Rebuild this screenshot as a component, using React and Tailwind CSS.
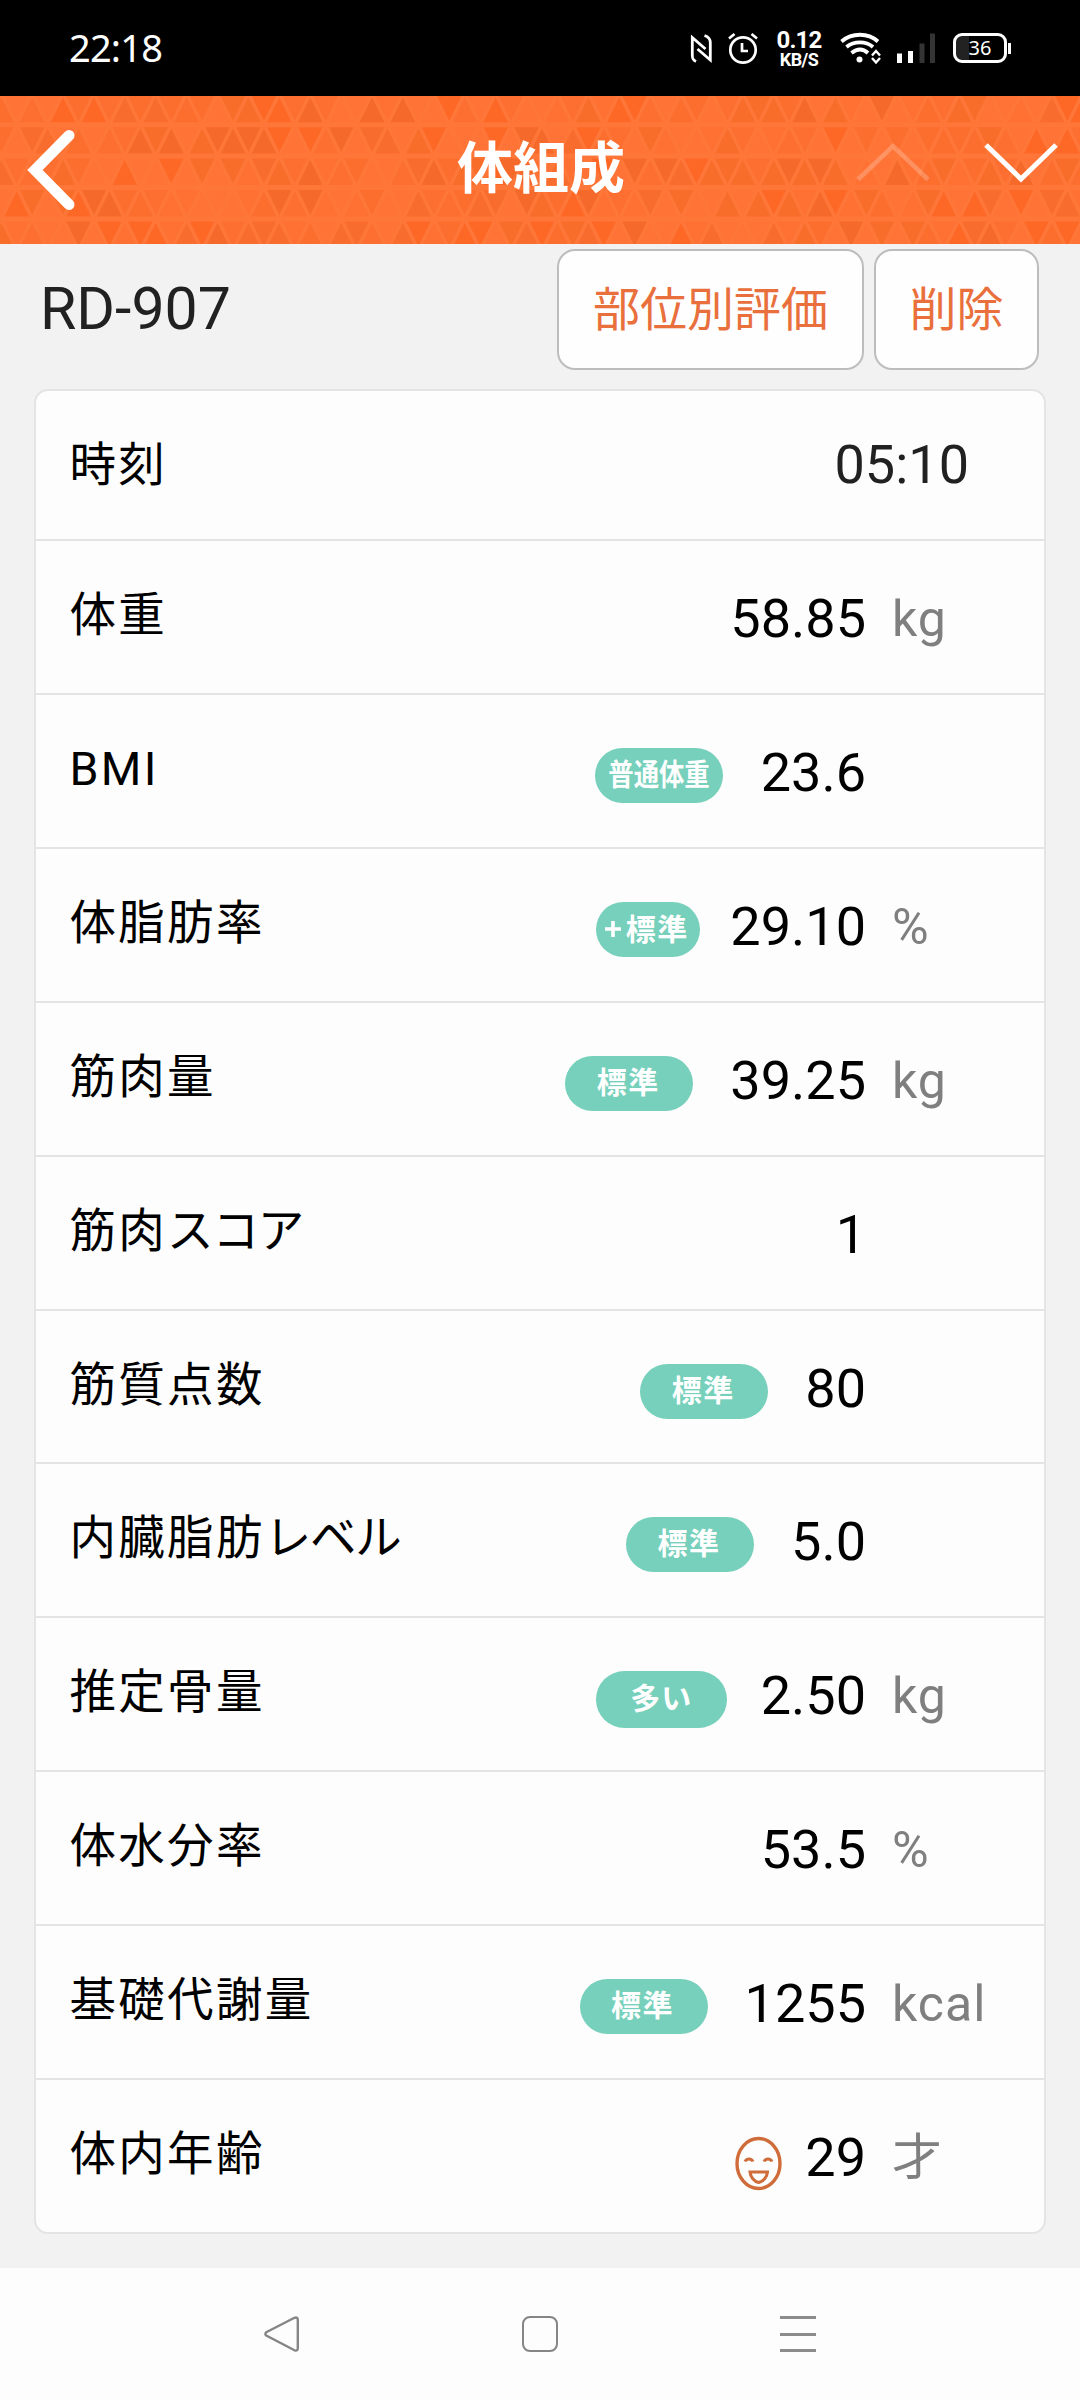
import React from "react";

const FONT = 'font-[Roboto,"Noto_Sans_CJK_JP",sans-serif]';

const ROWS = [
  { label: "時刻", value: "05:10", time: true },
  { label: "体重", value: "58.85", unit: "kg" },
  { label: "BMI", badge: "dense", text: "普通体重", value: "23.6" },
  { label: "体脂肪率", badge: "plus", text: "標準", value: "29.10", unit: "%" },
  { label: "筋肉量", badge: "std", text: "標準", value: "39.25", unit: "kg" },
  { label: "筋肉", kana: "スコア", value: "1" },
  { label: "筋質点数", badge: "std", text: "標準", value: "80" },
  { label: "内臓脂肪", kana: "レベル", badge: "std", text: "標準", value: "5.0" },
  { label: "推定骨量", badge: "wide", text: "多い", value: "2.50", unit: "kg" },
  { label: "体水分率", value: "53.5", unit: "%" },
  { label: "基礎代謝量", badge: "std", text: "標準", value: "1255", unit: "kcal" },
  { label: "体内年齢", badge: "face", value: "29", unit: "才" },
];

const TRI_W = 30.9;
const TRI_H = 31.4;
const SHADES = ["#ff7336", "#fb6e2e", "#f86c2d", "#f56a2b", "#ff7336", "#fe6826", "#f86d2a", "#fc6f31", "#fe7133"];

function shade(row, i) {
  const n = Math.sin(row * 127.1 + i * 311.7) * 43758.5453;
  return SHADES[Math.floor((n - Math.floor(n)) * SHADES.length)];
}

// Triangle lattice behind the title bar.
function Lattice() {
  const shapes = [];
  for (let r = 0; r < 5; r++) {
    const top = -2.7 + r * TRI_H;
    const bottom = top + TRI_H;
    const topPhase = r % 2 === 0 ? 1.3 : 16.75;
    const bottomPhase = r % 2 === 0 ? 16.75 : 1.3;
    for (let k = -1; k < 36; k++) {
      const tx = topPhase + k * TRI_W;
      const bx = bottomPhase + k * TRI_W;
      shapes.push(
        <path key={`d${r}-${k}`} d={`M${tx} ${top}h${TRI_W}l${-TRI_W / 2} ${TRI_H}z`} fill={shade(r, k * 2)} />,
        <path key={`u${r}-${k}`} d={`M${bx} ${bottom}h${TRI_W}l${-TRI_W / 2} ${-TRI_H}z`} fill={shade(r, k * 2 + 1)} />
      );
    }
  }
  return (
    <svg className="absolute inset-0 h-full w-full" viewBox="0 0 1080 148" preserveAspectRatio="none">
      <rect width="1080" height="148" fill="#ff7336" />
      <g stroke="#ff7639" strokeWidth="3.4">{shapes}</g>
      <path d="M0 28.7H1080M0 60.1H1080M0 91.5H1080M0 122.9H1080" stroke="#ff7639" strokeWidth="5" />
    </svg>
  );
}

function StatusBar() {
  return (
    <div className="flex h-[96px] items-start bg-black text-white">
      <span className='mt-[20px] ml-[69px] font-["Noto_Sans",sans-serif] text-[38px] leading-[54px] tracking-[-0.800px]'>22:18</span>
      <svg className="mt-[33px] ml-auto h-[31px] w-[24px]" viewBox="0 0 24 31" fill="none" stroke="#fff" strokeWidth="2.8">
        <path d="M7 28.5C3.800 27 3.300 25.500 3.300 22V4.500L16.500 16" />
        <path d="M15.500 2.500C20 4 21.300 6 21.300 9.500V27L8.500 16" />
      </svg>
      <svg className="mt-[32px] ml-[14px] h-[33px] w-[32px]" viewBox="0 0 32 33" fill="none" stroke="#fff" strokeWidth="2.7">
        <circle cx="16" cy="18" r="12.7" />
        <path d="M15 11V19H21" />
        <path d="M2 6.5L7.5 2M30 6.5L24.500 2" />
      </svg>
      <div className="mt-[29px] ml-[14px] flex w-[52px] flex-col items-center font-[Roboto,sans-serif]">
        <span className="text-[24px] leading-[22px] font-bold tracking-[-0.800px]">0.12</span>
        <span className="text-[18px] leading-[17px] font-bold tracking-[-0.600px]">KB/S</span>
      </div>
      <svg className="mt-[31px] ml-[15px] h-[34px] w-[42px]" viewBox="0 0 42 34" fill="none" stroke="#fff" strokeWidth="3.8">
        <path d="M1.5 10.5C12 1.5 28 1.5 38 10.5" />
        <path d="M6.5 16C14 9.8 26 9.8 33 16" />
        <path d="M11.5 22C17 17.5 23 17.5 28 22" />
        <circle cx="19.5" cy="28.5" r="3" fill="#fff" stroke="none" />
        <path d="M32 24.5L36 20L40 24.5M32 27L36 31.5L40 27" strokeWidth="2.4" />
      </svg>
      <svg className="mt-[32px] ml-[14px] h-[32px] w-[40px]" viewBox="0 0 40 32">
        <path d="M1 21.500h5v9.500h-5zM12 19h5v12h-5z" fill="#fff" />
        <path d="M23.500 11.500h5v19.500h-5zM34 1.500h5v29.500h-5z" fill="#343434" />
      </svg>
      <div className="mt-[33px] mr-[69px] ml-[17px] flex items-center">
        <div className='flex h-[30px] w-[54px] items-center justify-center rounded-[9px] border-[3px] border-white bg-[linear-gradient(90deg,#222_28%,#000_28%)] font-["Noto_Sans",sans-serif] text-[20px] leading-none'>
          36
        </div>
        <div className="ml-[1px] h-[11px] w-[3px] bg-white" />
      </div>
    </div>
  );
}

function TitleBar() {
  return (
    <header className="relative h-[148px] overflow-hidden">
      <Lattice />
      <div className="relative flex h-full items-center">
        <svg className="ml-[26px] h-[86px] w-[52px]" viewBox="0 0 52 86" fill="none" stroke="#fff" strokeWidth="11">
          <path d="M43 8.500L9 43L43 77.500" strokeLinecap="round" />
        </svg>
        <h1 className={`${FONT} mt-[-3px] ml-[379px] w-[168px] text-[56px] leading-[80px] font-bold whitespace-nowrap text-white`}>体組成</h1>
        <svg className="mt-[-16px] ml-[231px] h-[42px] w-[74px]" viewBox="0 0 74 42" fill="none" stroke="#fff" strokeOpacity="0.22" strokeWidth="4.500">
          <path d="M2 38.500L37 5L72 38.500" />
        </svg>
        <svg className="mt-[-14px] ml-[53px] h-[44px] w-[76px]" viewBox="0 0 76 44" fill="none" stroke="#fff" strokeWidth="5">
          <path d="M3 4L38 38L73 4" />
        </svg>
      </div>
    </header>
  );
}

function Face() {
  return (
    <svg className="mt-[56px] mr-[23px] h-[55px] w-[47px]" viewBox="0 0 47 55" fill="none" stroke="#cf6c3a" strokeWidth="3.400">
      <ellipse cx="23.500" cy="27.500" rx="21.500" ry="25" />
      <path d="M10 25.500C11.500 22 16.500 22 18 25.500M29 25.500C30.500 22 35.500 22 37 25.500" strokeWidth="3" />
      <path d="M15 36H32.500C32 41 28.500 45.500 23.700 46.500C19 45.500 15.500 41 15 36Z" strokeWidth="3" />
    </svg>
  );
}

function Badge({ kind, text }) {
  if (kind === "face") return <Face />;
  const base = "mt-[53px] flex items-center justify-center rounded-full bg-[#76d0bb] font-bold text-white whitespace-nowrap";
  if (kind === "dense")
    return (
      <div className={`${base} mr-[38px] h-[55px] w-[128px]`}>
        <span className="scale-x-[.86] text-[29.500px] leading-[55px]">{text}</span>
      </div>
    );
  if (kind === "plus")
    return (
      <div className={`${base} mr-[30px] h-[55px] w-[104px] gap-[5px] pr-[3px]`}>
        <svg className="h-[16px] w-[16px]" viewBox="0 0 16 16" stroke="#fff" strokeWidth="3.600">
          <path d="M0 8H16M8 0V16" />
        </svg>
        <span className="text-[30px] leading-[55px] tracking-[1.500px]">{text}</span>
      </div>
    );
  if (kind === "wide")
    return (
      <div className={`${base} mt-[52px] mr-[34px] h-[57px] w-[131px] pb-[2px]`}>
        <span className="text-[30px] leading-[55px] tracking-[1px]">{text}</span>
      </div>
    );
  return (
    <div className={`${base} mr-[37px] h-[55px] w-[128px] pr-[2px] pb-[2px]`}>
      <span className="text-[30px] leading-[55px] tracking-[1.500px]">{text}</span>
    </div>
  );
}

function Row({ label, kana, badge, text, value, unit, time }) {
  return (
    <li
      className={
        time
          ? "flex h-[150.200px] items-start border-b-2 border-[#e4e4e4] pl-[33.500px]"
          : "flex h-[153.880px] items-start border-b-2 border-[#e4e4e4] pl-[33.500px] last:h-[152px] last:border-b-0"
      }
    >
      <span className="mt-[44px] flex-1 text-[46.500px] leading-[60px] tracking-[2.300px] text-black">
        {label}
        {kana && <span className="tracking-[-1.200px]">{kana}</span>}
      </span>
      {badge && <Badge kind={badge} text={text} />}
      {time ? (
        <span className="mt-[44px] mr-[75px] text-[54px] leading-[60px] text-[#212121]">{value}</span>
      ) : (
        <>
          <span className="mt-[48px] text-[54px] leading-[60px] text-black">{value}</span>
          <span className="mt-[48px] ml-[26px] w-[152px] text-[50px] leading-[60px] tracking-[1px] text-[#7f7f7f]">{unit}</span>
        </>
      )}
    </li>
  );
}

function NavBar() {
  return (
    <nav className="flex h-[132px] items-start bg-[#fdfdfd] pt-[47px]">
      <svg className="ml-[263px] h-[38px] w-[38px]" viewBox="0 0 38 38" fill="none" stroke="#858585" strokeWidth="2.400" strokeLinejoin="round">
        <path d="M3.200 17.300Q1.500 19 3.200 20.500L31.500 35.300Q34.800 36.500 34.800 33V5Q34.800 1.500 31.500 2.800Z" />
      </svg>
      <div className="mt-[1px] ml-[221px] h-[36px] w-[36px] rounded-[8px] border-[2.500px] border-[#858585]" />
      <div className="mt-[1px] ml-[222px] flex h-[36px] w-[36px] flex-col justify-between">
        <div className="h-[3px] bg-[#8c8c8c]" />
        <div className="h-[3px] bg-[#8c8c8c]" />
        <div className="h-[3px] bg-[#8c8c8c]" />
      </div>
    </nav>
  );
}

export default function App() {
  return (
    <div className={`${FONT} flex h-[2400px] w-[1080px] flex-col overflow-hidden bg-[#f2f2f2]`}>
      <StatusBar />
      <TitleBar />
      <div className="flex h-[145px] items-start pt-[5px]">
        <span className="mt-[27px] ml-[40px] text-[59px] leading-[66px] text-[#212121]">RD-907</span>
        <button className="ml-auto h-[121px] w-[307px] rounded-[18px] border-2 border-[#bdbdbd] bg-[#fefefe] text-[47px] leading-[60px] text-[#e9703c]">部位別評価</button>
        <button className="mr-[41px] ml-[10px] h-[121px] w-[165px] rounded-[18px] border-2 border-[#bdbdbd] bg-[#fefefe] text-[47px] leading-[60px] text-[#e9703c]">削除</button>
      </div>
      <ul className="mx-[34px] rounded-[14px] border-2 border-[#e4e4e4] bg-[#fdfdfd]">
        {ROWS.map((row) => (
          <Row key={row.label} {...row} />
        ))}
      </ul>
      <div className="mt-auto">
        <NavBar />
      </div>
    </div>
  );
}
